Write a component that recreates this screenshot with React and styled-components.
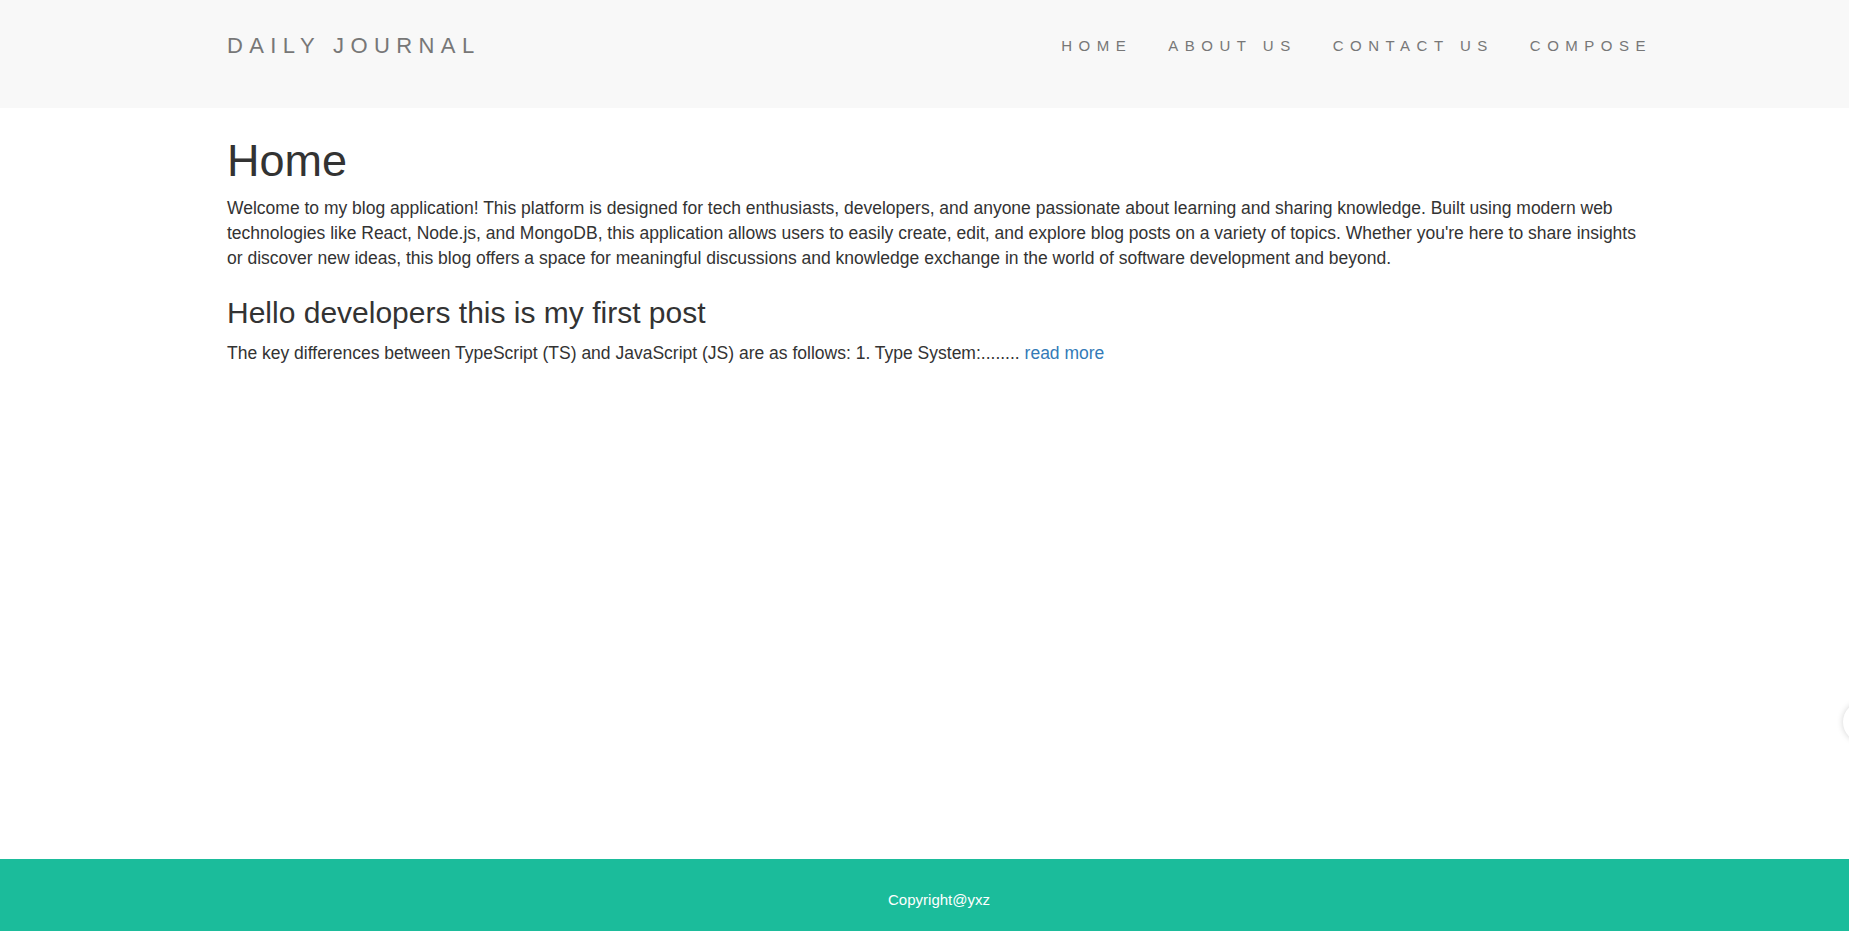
import React from "react";
import styled, { createGlobalStyle } from "styled-components";

const GlobalStyle = createGlobalStyle`
  html, body {
    margin: 0;
    padding: 0;
  }
  body {
    font-family: "Liberation Sans", Arial, sans-serif;
    font-size: 17.5px;
    line-height: 25px;
    color: #333;
    background: #fff;
    overflow: hidden;
  }
`;

const Page = styled.div`
  min-height: 100vh;
  display: flex;
  flex-direction: column;
`;

const Navbar = styled.nav`
  background: #f8f8f8;
  height: 108px;
  box-sizing: border-box;
  padding-top: 20px;
`;

const Container = styled.div`
  width: 1422px;
  margin: 0 0 0 227px;
`;

const NavRow = styled(Container)`
  display: flex;
  align-items: center;
  justify-content: space-between;
  height: 51px;
`;

const Brand = styled.a`
  color: #777;
  font-size: 22px;
  letter-spacing: 6.4px;
  text-transform: uppercase;
  text-decoration: none;
`;

const NavList = styled.ul`
  display: flex;
  list-style: none;
  margin: 0 -21px 0 0;
  padding: 0;
`;

const NavLink = styled.a`
  display: block;
  padding: 0 18px;
  color: #777;
  font-size: 15px;
  letter-spacing: 6.5px;
  text-transform: uppercase;
  text-decoration: none;
`;

const Main = styled(Container)`
  flex: 1;
`;

const Title = styled.h1`
  font-size: 45px;
  font-weight: 400;
  line-height: 1.1;
  margin: 28px 0 10px;
`;

const Intro = styled.p`
  margin: 0 0 12px;
  padding-right: 5px;
`;

const PostTitle = styled.h2`
  font-size: 30px;
  font-weight: 400;
  line-height: 1.1;
  margin: 25px 0 12px;
`;

const PostText = styled.p`
  margin: 0 0 12px;
`;

const ReadMore = styled.a`
  color: #337ab7;
  text-decoration: none;
`;

const Footer = styled.footer`
  background: #1bbc9b;
  height: 72px;
  display: flex;
  align-items: center;
  justify-content: center;
  color: #fff;
  font-size: 15px;
  padding: 8px 0 0 29px;
  box-sizing: border-box;
`;

const SideBubble = styled.div`
  position: fixed;
  right: -34px;
  top: 702px;
  width: 40px;
  height: 40px;
  border-radius: 50%;
  background: #fff;
  box-shadow: 0 0 6px rgba(0, 0, 0, 0.18);
`;

const links = ["Home", "About Us", "Contact Us", "Compose"];

export default function App() {
  return (
    <Page>
      <GlobalStyle />
      <Navbar>
        <NavRow>
          <Brand href="#">Daily Journal</Brand>
          <NavList>
            {links.map((l) => (
              <li key={l}>
                <NavLink href="#">{l}</NavLink>
              </li>
            ))}
          </NavList>
        </NavRow>
      </Navbar>
      <Main>
        <Title>Home</Title>
        <Intro>
          Welcome to my blog application! This platform is designed for tech
          enthusiasts, developers, and anyone passionate about learning and
          sharing knowledge. Built using modern web technologies like React,
          Node.js, and MongoDB, this application allows users to easily create,
          edit, and explore blog posts on a variety of topics. Whether you're
          here to share insights or discover new ideas, this blog offers a space
          for meaningful discussions and knowledge exchange in the world of
          software development and beyond.
        </Intro>
        <PostTitle>Hello developers this is my first post</PostTitle>
        <PostText>
          The key differences between TypeScript (TS) and JavaScript (JS) are as
          follows: 1. Type System:........ <ReadMore href="#">read more</ReadMore>
        </PostText>
      </Main>
      <Footer>Copyright@yxz</Footer>
      <SideBubble />
    </Page>
  );
}
